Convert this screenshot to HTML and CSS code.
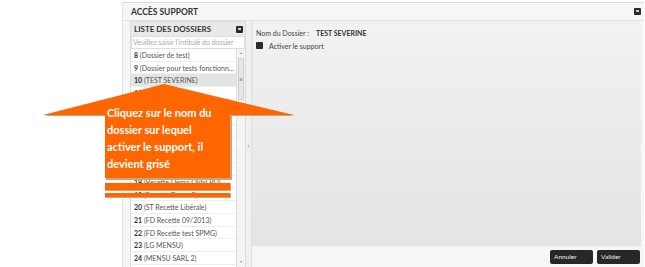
FILE: index.html
```html
<!DOCTYPE html>
<html lang="fr">
<head>
    <meta charset="UTF-8">
    <title>Accès support</title>
    <link rel="stylesheet" href="styles.css">
</head>
<body>
    <div class="dialog">
        <div class="dialog-title">
            <span>ACCÈS SUPPORT</span>
            <span class="close-btn"></span>
        </div>
        <div class="dialog-body">
            <!-- liste des dossiers -->
            <div class="folders">
                <div class="folders-head">
                    <span>LISTE DES DOSSIERS</span>
                    <span class="head-icon"></span>
                </div>
                <div class="search">Veuillez saisir l'intitulé du dossier</div>
                <div class="list-wrap">
                    <div class="rows">
                        <div class="row"><b>8</b> (Dossier de test)</div>
                        <div class="row"><b>9</b> (Dossier pour tests fonctionnels avancés)</div>
                        <div class="row selected"><b>10</b> (TEST SEVERINE)</div>
                        <div class="row"><b>11</b> (Dossier démo)</div>
                        <div class="row"><b>12</b> (Dossier démo 2)</div>
                        <div class="row"><b>13</b> (Recette paie)</div>
                        <div class="row"><b>14</b> (Recette paie 2)</div>
                        <div class="row"><b>15</b> (Recette SARL)</div>
                        <div class="row"><b>16</b> (Recette SAS)</div>
                        <div class="row"><b>17</b> (Recette Demo)</div>
                        <div class="row"><b>18</b> (Recette Demo Olibil PD)</div>
                        <div class="row"><b>19</b> (Recette Demo 2)</div>
                        <div class="row"><b>20</b> (ST Recette Libérale)</div>
                        <div class="row"><b>21</b> (FD Recette 09/2013)</div>
                        <div class="row"><b>22</b> (FD Recette test SPMG)</div>
                        <div class="row"><b>23</b> (LG MENSU)</div>
                        <div class="row"><b>24</b> (MENSU SARL 2)</div>
                    </div>
                    <div class="scrollbar">
                        <span class="arrow">&#9650;</span>
                        <span class="thumb"><i>&#8801;</i></span>
                        <span class="track"></span>
                        <span class="arrow">&#9660;</span>
                    </div>
                </div>
            </div>

            <div class="splitter">&#8249;</div>

            <!-- détail -->
            <div class="main">
                <div class="details">
                    <div class="field">
                        <span class="label">Nom du Dossier :</span>
                        <b>TEST SEVERINE</b>
                    </div>
                    <div class="field">
                        <span class="checkbox"></span>
                        <span>Activer le support</span>
                    </div>
                </div>
                <div class="footer">
                    <span class="btn">Annuler</span>
                    <span class="btn">Valider</span>
                </div>
            </div>
        </div>
    </div>

    <!-- bulle d'aide -->
    <div class="callout">
        <svg width="300" height="200" viewBox="0 0 300 200">
            <polygon points="164,84 294,115 231,115 231,179 105,179 105,115 43,115" fill="#c9a27e" transform="translate(1,1)"/>
            <polygon points="164,84 294,115 230,115 230,178 105,178 105,115 43,115" fill="#ff6600"/>
            <rect x="105" y="183" width="126" height="8" fill="#c9a27e"/>
            <rect x="105" y="183" width="125" height="7" fill="#ff6600"/>
            <rect x="105" y="193" width="126" height="5" fill="#c9a27e"/>
            <rect x="105" y="193" width="125" height="4" fill="#ff6600"/>
        </svg>
        <div class="callout-text">Cliquez sur le nom du<br>dossier sur lequel<br>activer le support, il<br>devient grisé</div>
    </div>
</body>
</html>
```

FILE: styles.css
```css
body {
    margin: 0;
    background-color: #fff;
    font-family: Lato, "Liberation Sans", sans-serif;
    color: #444;
}

.dialog {
    display: flex;
    flex-direction: column;
    width: 521px;
    height: 265px;
    margin: 2px 0 0 122px;
    background-color: #f6f6f6;
    border-top: 1px solid #dcdcdc;
    border-left: 1px solid #e4e4e4;
}

.dialog-title {
    display: flex;
    align-items: center;
    justify-content: space-between;
    height: 17px;
    padding: 0 3px 0 8px;
    border-bottom: 1px solid #e2e2e2;
    font-size: 8.5px;
    font-weight: bold;
    color: #333;
}

.close-btn,
.head-icon {
    position: relative;
    width: 7px;
    height: 7px;
    background-color: #2b2b2b;
    border-radius: 1px;
}
.close-btn::after,
.head-icon::after {
    content: "";
    position: absolute;
    left: 2px;
    top: 2px;
    width: 3px;
    height: 2px;
    background-color: #ccc;
}

.dialog-body {
    flex: 1;
    display: flex;
    padding: 0 3px 0 7px;
    min-height: 0;
}

/* liste des dossiers */
.folders {
    display: flex;
    flex-direction: column;
    width: 114px;
    background-color: #fff;
    border: 1px solid #dcdcdc;
}

.folders-head {
    display: flex;
    align-items: center;
    justify-content: space-between;
    height: 14px;
    padding: 0 2px 0 3px;
    background-color: #e9e9e9;
    font-size: 8px;
    font-weight: bold;
    color: #333;
}

.search {
    height: 11px;
    line-height: 11px;
    padding-left: 1px;
    border: 1px solid #ddd;
    font-size: 7px;
    color: #aaa;
    white-space: nowrap;
    overflow: hidden;
}

.list-wrap {
    flex: 1;
    display: flex;
    min-height: 0;
    overflow: hidden;
}

.rows {
    flex: 1;
    min-width: 0;
}

.row {
    height: 12.7px;
    line-height: 12.7px;
    padding-left: 3px;
    box-sizing: border-box;
    border-bottom: 1px solid #eee;
    font-size: 7px;
    color: #555;
    white-space: nowrap;
    overflow: hidden;
    text-overflow: ellipsis;
}
.row b {
    color: #333;
}
.row.selected {
    background-color: #e4e4e4;
}

.scrollbar {
    display: flex;
    flex-direction: column;
    align-items: center;
    width: 8px;
    background-color: #f4f4f4;
    border-left: 1px solid #ddd;
}
.arrow {
    height: 9px;
    line-height: 9px;
    font-size: 3px;
    color: #777;
}
.thumb {
    width: 6px;
    height: 42px;
    display: flex;
    align-items: center;
    justify-content: center;
    background-color: #e6e6e6;
    border: 1px solid #cfcfcf;
    box-sizing: border-box;
    font-size: 6px;
    color: #777;
}
.thumb i {
    font-style: normal;
}
.track {
    flex: 1;
}

.splitter {
    display: flex;
    align-items: center;
    justify-content: center;
    width: 5px;
    background-color: #f0f0f0;
    border-right: 1px solid #e2e2e2;
    font-size: 7px;
    color: #777;
}

/* détail */
.main {
    flex: 1;
    display: flex;
    flex-direction: column;
}

.details {
    flex: 1;
    padding: 5px 3px;
    background: linear-gradient(#f2f2f2, #e4e4e4);
    border-left: 1px solid #e6e6e6;
}

.field {
    display: flex;
    align-items: center;
    height: 13px;
    font-size: 7px;
    color: #444;
}
.field .label {
    width: 60px;
}
.field b {
    color: #333;
}

.checkbox {
    width: 7px;
    height: 7px;
    margin-right: 6px;
    background-color: #2b2b2b;
    border-radius: 1px;
}

.footer {
    display: flex;
    justify-content: flex-end;
    align-items: center;
    gap: 4px;
    height: 22px;
    padding-right: 1px;
}

.btn {
    width: 43px;
    height: 14px;
    line-height: 14px;
    padding-left: 4px;
    box-sizing: border-box;
    background-color: #272727;
    border-radius: 2px;
    font-size: 6.5px;
    color: #eee;
}

/* bulle d'aide */
.callout {
    position: absolute;
    left: 0;
    top: 0;
}
.callout svg {
    display: block;
}
.callout-text {
    position: absolute;
    left: 107px;
    top: 104px;
    width: 122px;
    font-size: 11px;
    line-height: 17px;
    font-weight: bold;
    color: #fff;
}
```
